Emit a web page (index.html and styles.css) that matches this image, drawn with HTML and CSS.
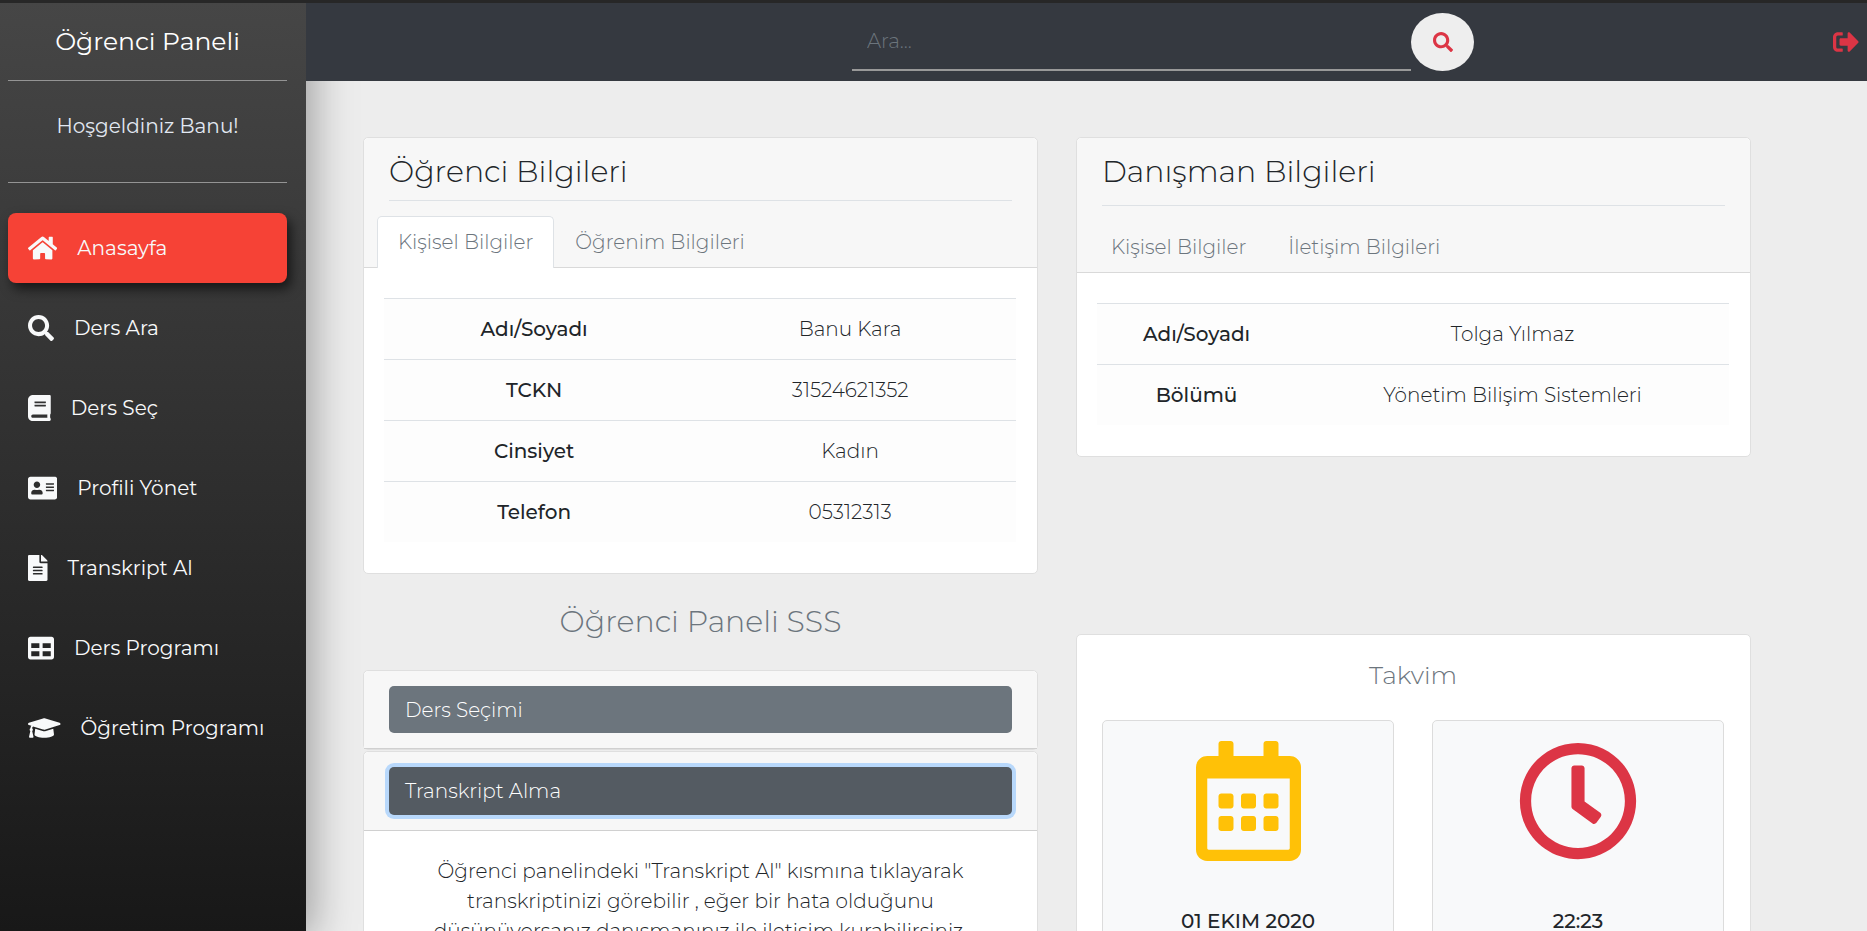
FILE: index.html
```html
<!DOCTYPE html>
<html lang="tr">
<head>
<meta charset="utf-8">
<meta name="viewport" content="width=device-width, initial-scale=1">
<title>Öğrenci Paneli</title>
<link rel="stylesheet" href="styles.css">
</head>
<body>
<div class="app">
  <aside class="sidebar">
    <a class="brand" href="#">Öğrenci Paneli</a>
    <p class="welcome">Hoşgeldiniz Banu!</p>
    <nav class="menu">
      <a class="menu-link active" href="#"><svg class="icon" viewBox="0 0 576 512"><path d="M280.37 148.26L96 300.11V464a16 16 0 0 0 16 16l112.06-.29a16 16 0 0 0 15.92-16V368a16 16 0 0 1 16-16h64a16 16 0 0 1 16 16v95.64a16 16 0 0 0 16 16.05L464 480a16 16 0 0 0 16-16V300L295.67 148.26a12.19 12.19 0 0 0-15.3 0zM571.6 251.47L488 182.56V44.05a12 12 0 0 0-12-12h-56a12 12 0 0 0-12 12v72.61L318.47 43a48 48 0 0 0-61 0L4.34 251.47a12 12 0 0 0-1.6 16.9l25.5 31A12 12 0 0 0 45.15 301l235.22-193.74a12.19 12.19 0 0 1 15.3 0L530.9 301a12 12 0 0 0 16.9-1.6l25.5-31a12 12 0 0 0-1.7-16.93z"/></svg>Anasayfa</a>
      <a class="menu-link" href="#"><svg class="icon" viewBox="0 0 512 512"><path d="M505 442.7L405.3 343c-4.5-4.5-10.6-7-17-7H372c27.6-35.3 44-79.7 44-128C416 93.1 322.9 0 208 0S0 93.1 0 208s93.1 208 208 208c48.3 0 92.7-16.4 128-44v16.3c0 6.4 2.5 12.5 7 17l99.7 99.7c9.4 9.4 24.6 9.4 33.9 0l28.3-28.3c9.4-9.4 9.4-24.6.1-34zM208 336c-70.7 0-128-57.2-128-128 0-70.7 57.2-128 128-128 70.7 0 128 57.2 128 128 0 70.7-57.2 128-128 128z"/></svg>Ders Ara</a>
      <a class="menu-link" href="#"><svg class="icon" viewBox="0 0 448 512"><path d="M448 360V24c0-13.3-10.7-24-24-24H96C43 0 0 43 0 96v320c0 53 43 96 96 96h328c13.300 0 24-10.700 24-24v-16c0-7.500-3.500-14.300-8.900-18.700-4.200-15.400-4.200-59.300 0-74.700 5.400-4.300 8.900-11.100 8.900-18.600zM128 134c0-3.300 2.700-6 6-6h212c3.300 0 6 2.700 6 6v20c0 3.300-2.700 6-6 6H134c-3.300 0-6-2.700-6-6v-20zm0 64c0-3.300 2.700-6 6-6h212c3.300 0 6 2.700 6 6v20c0 3.300-2.700 6-6 6H134c-3.300 0-6-2.700-6-6v-20zm253.400 250H96c-17.700 0-32-14.300-32-32 0-17.600 14.400-32 32-32h285.400c-1.900 17.100-1.900 46.900 0 64z"/></svg>Ders Seç</a>
      <a class="menu-link" href="#"><svg class="icon" viewBox="0 0 576 512"><path d="M528 32H48C21.500 32 0 53.500 0 80v352c0 26.500 21.500 48 48 48h480c26.500 0 48-21.500 48-48V80c0-26.500-21.500-48-48-48zm-352 96c35.300 0 64 28.700 64 64s-28.700 64-64 64-64-28.700-64-64 28.700-64 64-64zm112 236.800c0 10.600-10 19.200-22.400 19.200H86.400C74 384 64 375.400 64 364.800v-19.200c0-31.800 30.100-57.600 67.200-57.600h5c12.300 5.100 25.700 8 39.800 8s27.600-2.900 39.800-8h5c37.100 0 67.200 25.800 67.200 57.600v19.200zM512 312c0 4.400-3.600 8-8 8H360c-4.400 0-8-3.600-8-8v-16c0-4.400 3.600-8 8-8h144c4.400 0 8 3.600 8 8v16zm0-64c0 4.400-3.600 8-8 8H360c-4.400 0-8-3.600-8-8v-16c0-4.400 3.600-8 8-8h144c4.400 0 8 3.600 8 8v16zm0-64c0 4.400-3.600 8-8 8H360c-4.400 0-8-3.600-8-8v-16c0-4.400 3.600-8 8-8h144c4.400 0 8 3.600 8 8v16z"/></svg>Profili Yönet</a>
      <a class="menu-link" href="#"><svg class="icon" viewBox="0 0 384 512"><path d="M224 136V0H24C10.700 0 0 10.700 0 24v464c0 13.300 10.700 24 24 24h336c13.300 0 24-10.700 24-24V160H248c-13.200 0-24-10.800-24-24zm64 236c0 6.600-5.400 12-12 12H108c-6.600 0-12-5.400-12-12v-8c0-6.600 5.400-12 12-12h168c6.600 0 12 5.400 12 12v8zm0-64c0 6.600-5.400 12-12 12H108c-6.600 0-12-5.400-12-12v-8c0-6.600 5.400-12 12-12h168c6.600 0 12 5.400 12 12v8zm0-72v8c0 6.600-5.400 12-12 12H108c-6.600 0-12-5.400-12-12v-8c0-6.600 5.400-12 12-12h168c6.600 0 12 5.400 12 12zm96-114.100v6.100H256V0h6.100c6.400 0 12.500 2.500 17 7l97.900 98c4.500 4.500 7 10.600 7 16.900z"/></svg>Transkript Al</a>
      <a class="menu-link" href="#"><svg class="icon" viewBox="0 0 512 512"><path d="M464 32H48C21.490 32 0 53.490 0 80v352c0 26.510 21.490 48 48 48h416c26.510 0 48-21.490 48-48V80c0-26.510-21.490-48-48-48zM224 416H64v-96h160v96zm0-160H64v-96h160v96zm224 160H288v-96h160v96zm0-160H288v-96h160v96z"/></svg>Ders Programı</a>
      <a class="menu-link" href="#"><svg class="icon" viewBox="0 0 640 512"><path d="M622.340 153.200L343.400 67.500c-15.200-4.670-31.600-4.670-46.790 0L17.660 153.200c-23.540 7.230-23.540 38.360 0 45.590l48.630 14.940c-10.670 13.190-17.230 29.280-17.880 46.900C38.780 266.150 32 276.110 32 288c0 10.780 5.680 19.850 13.860 25.650L20.330 428.530C18.110 438.520 25.710 448 35.940 448h56.110c10.240 0 17.840-9.480 15.620-19.470L82.140 313.650C90.320 307.850 96 298.780 96 288c0-11.570-6.470-21.250-15.660-26.870.76-15.020 8.440-28.300 20.690-36.720L296.600 284.500c9.060 2.780 26.440 6.250 46.790 0l278.950-85.700c23.550-7.240 23.550-38.360 0-45.600zM352.790 315.090c-28.530 8.760-52.840 3.920-65.590 0l-145.020-44.550L128 384c0 35.350 85.960 64 192 64s192-28.650 192-64l-14.180-113.470-145.030 44.560z"/></svg>Öğretim Programı</a>
    </nav>
  </aside>

  <div class="page">
    <header class="topbar">
      <form class="search">
        <input class="search-input" type="text" placeholder="Ara..." aria-label="Ara">
        <button class="search-button" type="button" aria-label="Ara"><svg class="icon-small" viewBox="0 0 512 512"><path d="M505 442.700L405.300 343c-4.500-4.500-10.600-7-17-7H372c27.600-35.300 44-79.700 44-128C416 93.100 322.900 0 208 0S0 93.100 0 208s93.100 208 208 208c48.300 0 92.700-16.400 128-44v16.300c0 6.400 2.500 12.500 7 17l99.700 99.700c9.400 9.400 24.600 9.400 33.900 0l28.300-28.300c9.400-9.400 9.400-24.600.1-34zM208 336c-70.700 0-128-57.200-128-128 0-70.700 57.200-128 128-128 70.700 0 128 57.200 128 128 0 70.700-57.200 128-128 128z"/></svg></button>
      </form>
      <a class="logout" href="#" aria-label="Çıkış"><svg class="icon" viewBox="0 0 512 512"><path d="M497 273L329 441c-15 15-41 4.500-41-17v-96H152c-13.300 0-24-10.700-24-24v-96c0-13.300 10.700-24 24-24h136V88c0-21.400 25.900-32 41-17l168 168c9.300 9.400 9.300 24.600 0 34zM192 436v-40c0-6.600-5.400-12-12-12H96c-17.700 0-32-14.300-32-32V160c0-17.700 14.300-32 32-32h84c6.600 0 12-5.400 12-12V76c0-6.600-5.400-12-12-12H96c-53 0-96 43-96 96v192c0 53 43 96 96 96h84c6.600 0 12-5.400 12-12z"/></svg></a>
    </header>

    <main class="content">
      <div class="column">
        <section class="card">
          <div class="card-header">
            <h2 class="card-title">Öğrenci Bilgileri</h2>
            <div class="tabs">
              <a class="tab selected" href="#">Kişisel Bilgiler</a>
              <a class="tab" href="#">Öğrenim Bilgileri</a>
            </div>
          </div>
          <div class="card-body">
            <table class="info student">
              <tr><th scope="row">Adı/Soyadı</th><td>Banu Kara</td></tr>
              <tr><th scope="row">TCKN</th><td>31524621352</td></tr>
              <tr><th scope="row">Cinsiyet</th><td>Kadın</td></tr>
              <tr><th scope="row">Telefon</th><td>05312313</td></tr>
            </table>
          </div>
        </section>

        <h2 class="faq-title">Öğrenci Paneli SSS</h2>
        <div class="faq">
          <section class="card faq-item">
            <div class="faq-header"><button class="faq-button" type="button">Ders Seçimi</button></div>
          </section>
          <section class="card faq-item">
            <div class="faq-header"><button class="faq-button open" type="button">Transkript Alma</button></div>
            <p class="faq-text">Öğrenci panelindeki "Transkript Al" kısmına tıklayarak<br>transkriptinizi görebilir , eğer bir hata olduğunu<br>düşünüyorsanız danışmanınız ile iletişim kurabilirsiniz.</p>
          </section>
        </div>
      </div>

      <div class="column advisor-column">
        <section class="card">
          <div class="card-header roomy">
            <h2 class="card-title">Danışman Bilgileri</h2>
            <div class="tabs">
              <a class="tab" href="#">Kişisel Bilgiler</a>
              <a class="tab" href="#">İletişim Bilgileri</a>
            </div>
          </div>
          <div class="card-body">
            <table class="info advisor">
              <tr><th scope="row">Adı/Soyadı</th><td>Tolga Yılmaz</td></tr>
              <tr><th scope="row">Bölümü</th><td>Yönetim Bilişim Sistemleri</td></tr>
            </table>
          </div>
        </section>

        <section class="card calendar">
          <h3 class="calendar-title">Takvim</h3>
          <div class="tiles">
            <div class="tile">
              <svg class="tile-icon date" viewBox="0 0 448 512"><path d="M148 288h-40c-6.600 0-12-5.400-12-12v-40c0-6.600 5.400-12 12-12h40c6.600 0 12 5.400 12 12v40c0 6.600-5.400 12-12 12zm108-12v-40c0-6.600-5.400-12-12-12h-40c-6.600 0-12 5.400-12 12v40c0 6.600 5.400 12 12 12h40c6.600 0 12-5.400 12-12zm96 0v-40c0-6.600-5.400-12-12-12h-40c-6.600 0-12 5.400-12 12v40c0 6.600 5.400 12 12 12h40c6.600 0 12-5.400 12-12zm-96 96v-40c0-6.600-5.400-12-12-12h-40c-6.600 0-12 5.400-12 12v40c0 6.600 5.400 12 12 12h40c6.600 0 12-5.400 12-12zm-96 0v-40c0-6.600-5.400-12-12-12h-40c-6.600 0-12 5.400-12 12v40c0 6.600 5.400 12 12 12h40c6.600 0 12-5.400 12-12zm192 0v-40c0-6.600-5.400-12-12-12h-40c-6.600 0-12 5.400-12 12v40c0 6.600 5.400 12 12 12h40c6.600 0 12-5.400 12-12zm96-260v352c0 26.500-21.500 48-48 48H48c-26.500 0-48-21.500-48-48V112c0-26.500 21.500-48 48-48h48V12c0-6.600 5.400-12 12-12h40c6.600 0 12 5.400 12 12v52h128V12c0-6.600 5.400-12 12-12h40c6.600 0 12 5.400 12 12v52h48c26.500 0 48 21.500 48 48zm-48 346V160H48v298c0 3.300 2.700 6 6 6h340c3.300 0 6-2.700 6-6z"/></svg>
              <p class="tile-label">01 EKIM 2020</p>
            </div>
            <div class="tile">
              <svg class="tile-icon time" viewBox="0 0 512 512"><path d="M256 8C119 8 8 119 8 256s111 248 248 248 248-111 248-248S393 8 256 8zm0 448c-110.500 0-200-89.500-200-200S145.500 56 256 56s200 89.500 200 200-89.500 200-200 200zm61.800-104.400l-84.900-61.700c-3.100-2.300-4.900-5.900-4.900-9.700V116c0-6.600 5.400-12 12-12h32c6.600 0 12 5.400 12 12v141.700l66.800 48.600c5.400 3.900 6.500 11.400 2.600 16.800L334.600 349c-3.900 5.300-11.400 6.500-16.800 2.600z"/></svg>
              <p class="tile-label">22:23</p>
            </div>
          </div>
        </section>
      </div>
    </main>
  </div>
</div>
</body>
</html>
```
FILE: styles.css
```css
* { box-sizing: border-box; }

body {
  margin: 0;
  background: #ededed;
  color: #212529;
  font-family: Montserrat, Inter, "Open Sans", sans-serif;
  font-size: 20px;
  font-weight: 300;
  line-height: 30px;
}

a { color: inherit; text-decoration: none; }
h2, h3, p { margin: 0; font-weight: inherit; }
svg { display: block; fill: currentColor; }

.app {
  display: flex;
  height: 100vh;
  overflow: hidden;
  border-top: 3px solid #272727;
}

/* Sidebar */
.sidebar {
  flex: 0 0 306px;
  padding: 0 19px 0 8px;
  background: linear-gradient(#464646, #181818);
  box-shadow: 6px 7px 40px rgba(0, 0, 0, 0.35);
  color: #f8f9fa;
  font-weight: 400;
  z-index: 1;
}

.brand {
  display: block;
  padding: 23px 0;
  border-bottom: 1px solid #949494;
  color: #fff;
  font-size: 25px;
  line-height: 31px;
  text-align: center;
}

.welcome {
  padding: 30px 0 41px;
  border-bottom: 1px solid #949494;
  color: #e2e8f2;
  text-align: center;
}

.menu {
  display: flex;
  flex-direction: column;
  gap: 10px;
  padding-top: 30px;
}

.menu-link {
  display: flex;
  align-items: center;
  gap: 20px;
  padding: 20px;
  border-radius: 8px;
  white-space: nowrap;
}

.menu-link.active {
  background: #f64236;
  box-shadow: 4px 6px 12px rgba(0, 0, 0, 0.6);
}

.icon { height: 26px; flex: none; }
.icon-small { height: 20px; }

/* Top bar */
.page {
  display: flex;
  flex: 1;
  flex-direction: column;
  min-width: 0;
}

.topbar {
  position: relative;
  z-index: 2;
  display: flex;
  flex: none;
  align-items: center;
  padding: 10px 8px 10px 546px;
  background: #353940;
}

.search { display: flex; flex: 0 1 622px; min-width: 0; }

.search-input {
  flex: 1;
  min-width: 0;
  padding: 0 15px;
  border: 0;
  border-bottom: 2px solid #999;
  background: transparent;
  color: #fff;
  font: inherit;
}

.search-input::placeholder { color: #6c757d; }

.search-button {
  display: grid;
  place-items: center;
  width: 63px;
  height: 58px;
  padding: 0;
  border: 0;
  border-radius: 50%;
  background: #eee;
  color: #dc3545;
}

.logout { margin-left: auto; color: #dc3545; }

/* Content */
.content {
  display: grid;
  grid-template-columns: 1fr 1fr;
  gap: 38px;
  align-items: start;
  padding: 56px 116px 56px 57px;
  overflow: auto;
  scrollbar-width: none;
}

.column { min-width: 0; }

.card {
  border: 1px solid #dfdfdf;
  border-radius: 5px;
  background: #fff;
}

.card-header {
  padding: 16px 13px 0;
  border-bottom: 1px solid #d9d9d9;
  border-radius: 5px 5px 0 0;
  background: #f7f7f7;
}

.card-title {
  margin: 0 12px 15px;
  padding-bottom: 10px;
  border-bottom: 1px solid #dee2e6;
  font-size: 30px;
  line-height: 36px;
}

.roomy .card-title { padding-bottom: 15px; }

.tabs { display: flex; margin-bottom: -1px; }

.tab {
  padding: 10px 20px 11px;
  border: 1px solid transparent;
  border-bottom: 0;
  border-radius: 5px 5px 0 0;
  color: #6c757d;
}

.tab.selected { border-color: #dee2e6; background: #fff; }

.card-body { padding: 30px 21px 31px 20px; }

.info {
  width: 100%;
  border-collapse: collapse;
  background: #fdfdfd;
  text-align: center;
}

.info th, .info td {
  padding: 15px;
  border-top: 1px solid #dee2e6;
}

.info th { font-weight: 500; }
.info.student th { width: 47.5%; }
.info.advisor th { width: 31.5%; }

/* Frequently asked questions */
.faq-title {
  padding: 30px 0;
  color: #6c757d;
  font-size: 30px;
  line-height: 36px;
  text-align: center;
}

.faq { display: grid; gap: 1px; }

.faq-header {
  padding: 15px 25px;
  border-bottom: 1px solid #d0d0d0;
  border-radius: 5px 5px 0 0;
  background: #f7f7f7;
}

.faq-button {
  display: block;
  width: 100%;
  padding: 9px 16px 8px;
  border: 0;
  border-radius: 5px;
  background: #6c757d;
  color: #fff;
  font: inherit;
  text-align: left;
}

.faq-button.open {
  padding-bottom: 9px;
  background: #545b62;
  box-shadow: 0 0 0 4px #b8d8fb;
}

.faq-text { padding: 25px; text-align: center; }

/* Calendar */
.advisor-column { display: grid; gap: 177px; }

.calendar { padding: 25px 26px 25px 25px; }

.calendar-title {
  padding-bottom: 30px;
  color: #6c757d;
  font-size: 25px;
  line-height: 30px;
  text-align: center;
}

.tiles { display: grid; grid-template-columns: 1fr 1fr; gap: 38px; }

.tile {
  display: grid;
  justify-items: center;
  gap: 45px;
  padding: 20px;
  border: 1px solid #dcdcdc;
  border-radius: 5px;
  background: #f8f9fa;
}

.tile-icon { height: 120px; }
.date { color: #ffc107; }
.time { color: #dc3545; }
.tile-label { font-weight: 500; }
```
